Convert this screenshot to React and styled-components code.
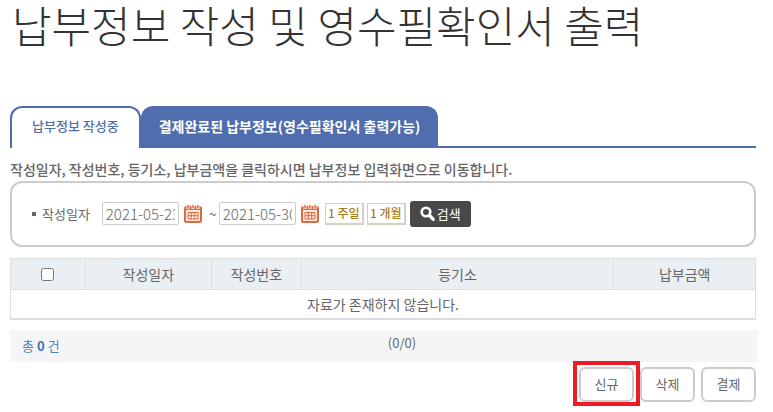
import React, { useState } from 'react';
import styled, { createGlobalStyle } from 'styled-components';

const columns = [
  { label: '작성일자', width: '17%' },
  { label: '작성번호', width: '12%' },
  { label: '등기소', width: '42%' },
  { label: '납부금액', width: '19%' },
];

const CalendarIcon = () => (
  <svg width="18" height="18" viewBox="0 0 18 18" aria-hidden="true">
    <rect x="1" y="2" width="16" height="15" rx="1.5" fill="#fbe9e1" stroke="#da6a42" strokeWidth="2" />
    <path d="M2 3h14v2H2z" fill="#da6a42" />
    <path d="M4 0v4M9 0v4M14 0v4" stroke="#fff" strokeWidth="3" />
    <path d="M4 0v3.500M9 0v3.500M14 0v3.500" stroke="#da6a42" strokeWidth="1.500" />
    <path d="M4 7.500h10v6.500H4zM4 10.700h10M7.300 7.500v6.500M10.700 7.500v6.500" fill="none" stroke="#da6a42" />
  </svg>
);

const SearchIcon = () => (
  <svg width="15" height="15" viewBox="0 0 15 15" aria-hidden="true">
    <circle cx="6" cy="6" r="4.3" fill="none" stroke="#fff" strokeWidth="2.6" />
    <path d="M9.5 9.5l3.8 3.8" stroke="#fff" strokeWidth="3.2" strokeLinecap="round" />
  </svg>
);

const App = () => {
  const [from, setFrom] = useState('2021-05-23');
  const [to, setTo] = useState('2021-05-30');

  return (
    <Page>
      <GlobalStyle />
      <Title>납부정보 작성 및 영수필확인서 출력</Title>

      <Tabs>
        <Tab type="button" $active>납부정보 작성중</Tab>
        <Tab type="button">결제완료된 납부정보(영수필확인서 출력가능)</Tab>
      </Tabs>

      <Guide>작성일자, 작성번호, 등기소, 납부금액을 클릭하시면 납부정보 입력화면으로 이동합니다.</Guide>

      <SearchForm onSubmit={e => e.preventDefault()}>
        <SearchLabel htmlFor="from">작성일자</SearchLabel>
        <DateInput id="from" value={from} onChange={e => setFrom(e.target.value)} />
        <IconButton type="button" aria-label="시작일 선택"><CalendarIcon /></IconButton>
        <Tilde>~</Tilde>
        <DateInput aria-label="종료일" value={to} onChange={e => setTo(e.target.value)} />
        <IconButton type="button" aria-label="종료일 선택"><CalendarIcon /></IconButton>
        <Periods>
          <PeriodButton type="button">1 주일</PeriodButton>
          <PeriodButton type="button">1 개월</PeriodButton>
        </Periods>
        <SearchButton type="submit">
          <SearchIcon />
          <span>검색</span>
        </SearchButton>
      </SearchForm>

      <Table>
        <thead>
          <tr>
            <HeadCell $width="10%">
              <Checkbox type="checkbox" aria-label="전체 선택" />
            </HeadCell>
            {columns.map(column => (
              <HeadCell key={column.label} $width={column.width}>{column.label}</HeadCell>
            ))}
          </tr>
        </thead>
        <tbody>
          <tr>
            <EmptyCell colSpan={columns.length + 1}>자료가 존재하지 않습니다.</EmptyCell>
          </tr>
        </tbody>
      </Table>

      <Summary>
        <Total>총<strong>0</strong>건</Total>
        <PageCount>(0/0)</PageCount>
      </Summary>

      <Actions>
        <Highlight>
          <ActionButton type="button">신규</ActionButton>
        </Highlight>
        <ActionButton type="button">삭제</ActionButton>
        <ActionButton type="button">결제</ActionButton>
      </Actions>
    </Page>
  );
};

const GlobalStyle = createGlobalStyle`
  * {
    box-sizing: border-box;
  }

  body {
    margin: 0;
    background: #fff;
    color: #666;
    font-family: "Noto Sans CJK KR", sans-serif;
    font-size: 13px;
    line-height: 20px;
  }

  button,
  input {
    font: inherit;
    color: inherit;
  }

  button {
    cursor: pointer;
  }
`;

const Page = styled.main`
  padding: 0 17px 10px 10px;
`;

const Title = styled.h1`
  margin: 0 0 58px;
  padding-left: 2px;
  color: #333;
  font-size: 43px;
  font-weight: 300;
  line-height: 48px;
  white-space: nowrap;
`;

const Tabs = styled.div`
  display: flex;
  height: 42px;
  border-bottom: 2px solid #506eae;
`;

const Tab = styled.button`
  height: 42px;
  padding: 0 ${({ $active }) => ($active ? 20 : 16)}px 4px;
  border: 2px solid #506eae;
  border-bottom: none;
  border-radius: 12px 12px 0 0;
  background: ${({ $active }) => ($active ? '#fff' : '#506eae')};
  color: ${({ $active }) => ($active ? '#506eae' : '#fff')};
  font-size: ${({ $active }) => ($active ? 13 : 14)}px;
  font-weight: ${({ $active }) => ($active ? 500 : 700)};
  white-space: nowrap;
`;

const Guide = styled.p`
  margin: 11px 0 2px;
  font-size: 14px;
  font-weight: 500;
`;

const SearchForm = styled.form`
  display: flex;
  align-items: center;
  height: 66px;
  padding: 0 20px 1px;
  border: 2px solid #ccc;
  border-radius: 12px;
`;

const SearchLabel = styled.label`
  display: flex;
  align-items: center;
  gap: 6px;
  margin-right: 12px;

  &::before {
    content: '';
    width: 4px;
    height: 4px;
    background: #666;
  }
`;

const DateInput = styled.input`
  width: 77px;
  height: 23px;
  padding: 0 3px;
  border: 1px solid #ccc;
  border-radius: 2px;
  background: #fff;
  font-size: 15px;
  font-weight: 300;
`;

const IconButton = styled.button`
  display: flex;
  margin: 0 5px;
  padding: 0;
  border: none;
  background: none;
`;

const Tilde = styled.span`
  width: 12px;
  text-align: center;
`;

const Periods = styled.div`
  display: flex;
  gap: 3px;
  margin: 0 4px 0 1px;
`;

const PeriodButton = styled.button`
  width: 39px;
  height: 22px;
  padding: 0;
  border: 1px solid #d5cfc5;
  border-width: 1px 2px 2px 1px;
  background: #fff;
  color: #a87b17;
  font-size: 12px;
  font-weight: 500;
  line-height: 16px;
  white-space: nowrap;
`;

const SearchButton = styled.button`
  display: flex;
  align-items: center;
  gap: 2px;
  height: 26px;
  padding: 0 10px;
  border: none;
  border-radius: 3px;
  background: #484848;
  color: #fff;
  white-space: nowrap;
`;

const Table = styled.table`
  width: 100%;
  margin-top: 11px;
  border-collapse: collapse;
  table-layout: fixed;
  border: 1px solid #dcdee2;
  border-bottom: 2px solid #dcdce2;
  font-size: 14px;
`;

const HeadCell = styled.th`
  width: ${({ $width }) => $width};
  height: 31px;
  padding: 0;
  border: 1px solid #dcdee2;
  background: #eaeff3;
  font-weight: 400;
`;

const Checkbox = styled.input`
  display: block;
  width: 13px;
  height: 13px;
  margin: 0 auto;
`;

const EmptyCell = styled.td`
  height: 29px;
  padding: 0;
  text-align: center;
`;

const Summary = styled.div`
  display: grid;
  grid-template-columns: 1fr auto 1fr;
  height: 32px;
  margin: 10px -2px 0 0;
  padding: 0 12px;
  background: #f5f5f8;
`;

const Total = styled.span`
  align-self: center;
  color: #4a86bd;

  strong {
    margin: 0 3px;
    color: #4272b8;
  }
`;

const PageCount = styled.span`
  margin-top: 3px;
  padding-left: 36px;
`;

const Actions = styled.div`
  display: flex;
  justify-content: flex-end;
  gap: 6px;
  padding-top: 5px;
`;

const ActionButton = styled.button`
  display: block;
  width: 55px;
  height: 35px;
  padding: 0;
  border: 2px solid #ccc;
  border-radius: 6px;
  background: #fff;
`;

const Highlight = styled.div`
  position: relative;

  &::after {
    content: '';
    position: absolute;
    inset: -6px -6px -4px;
    border: 4px solid #ed1c24;
    pointer-events: none;
  }
`;

export default App;
